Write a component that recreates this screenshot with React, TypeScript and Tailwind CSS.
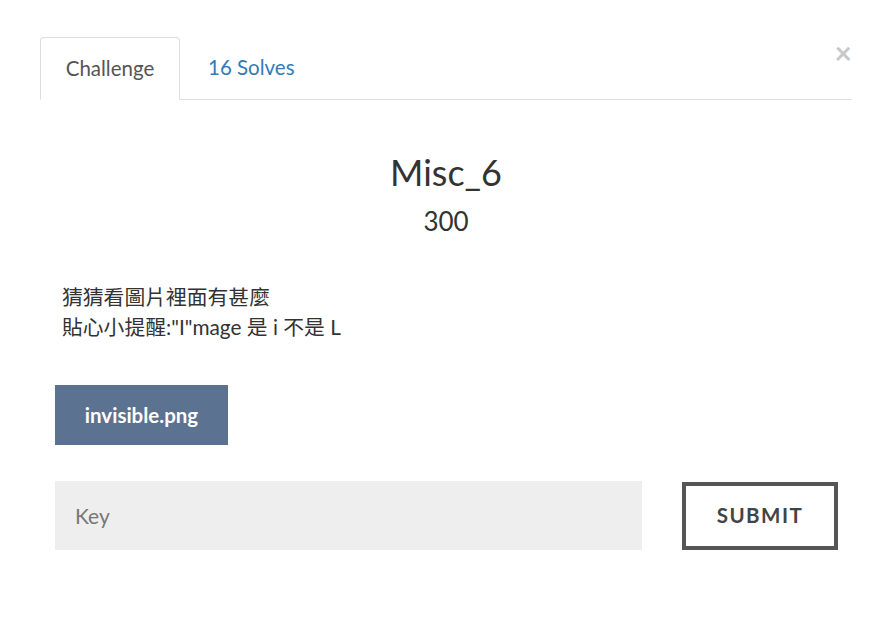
import { useState } from 'react';

export default function App() {
  const [tab, setTab] = useState<'challenge' | 'solves'>('challenge');
  const [key, setKey] = useState('');

  return (
    <div
      className="min-h-screen w-full bg-white text-[#333]"
      style={{ fontFamily: 'Lato, "Noto Sans CJK TC", sans-serif' }}
    >
      <div className="relative px-[40px] pt-[37px]">
        {/* Close */}
        <button className="absolute right-[40px] top-[37px] text-[30px] leading-none font-bold text-[#c8c8c8]">
          ×
        </button>

        {/* Tabs */}
        <div className="flex border-b border-[#ddd]">
          <button
            onClick={() => setTab('challenge')}
            className="-mb-px h-[63px] w-[140px] rounded-t-[4px] border border-[#ddd] border-b-white bg-white pb-[1px] text-[20.5px] text-[#555]"
          >
            Challenge
          </button>
          <button
            onClick={() => setTab('solves')}
            className="h-[62px] px-[28px] pb-[1px] text-[20.5px] text-[#337ab7]"
          >
            16 Solves
          </button>
        </div>

        {/* Body */}
        <div className="pt-[50px]">
          <h3 className="text-center text-[36px] leading-[44px] text-[#333]">Misc_6</h3>
          <h4 className="mt-[11px] text-center text-[26px] leading-[32px] text-[#333]">300</h4>

          <div className="mt-[45px] pl-[22px] text-[20.8px] leading-[30px] text-[#333]">
            <p>猜猜看圖片裡面有甚麼</p>
            <p>貼心小提醒:"I"mage 是 i 不是 L</p>
          </div>

          <div className="mt-[43px] pl-[15px]">
            <a className="inline-flex h-[60px] w-[173px] items-center justify-center bg-[#5b7290] text-[20.5px] font-bold text-white">
              invisible.png
            </a>
          </div>

          <div className="mt-[36px] flex items-center gap-[40px] pl-[15px] pr-[14px]">
            <input
              value={key}
              onChange={(e) => setKey(e.target.value)}
              placeholder="Key"
              className="h-[69px] flex-1 bg-[#eeeeee] px-[20px] text-[21px] text-[#555] outline-none placeholder:text-[#777]"
            />
            <button className="h-[68px] w-[156px] border-[4px] border-[#555] bg-white text-[20.5px] font-bold tracking-[1.5px] text-[#444]">
              SUBMIT
            </button>
          </div>
        </div>
      </div>
    </div>
  );
}
